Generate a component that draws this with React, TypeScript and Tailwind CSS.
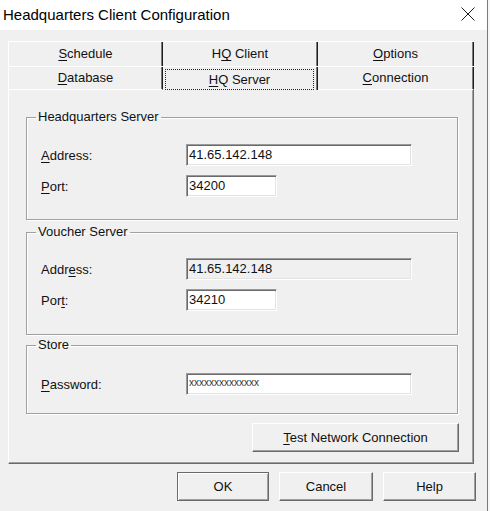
import type { ReactNode } from "react"

function U({ children }: { children: ReactNode }) {
  return <span className="underline underline-offset-[2px] decoration-1">{children}</span>
}

function Tab({ children, className = "" }: { children: ReactNode; className?: string }) {
  return (
    <div
      className={`flex items-center justify-center border-r border-r-[#1e1e1e] shadow-[inset_-1px_0_0_#7a7a7a] ${className}`}
    >
      {children}
    </div>
  )
}

function Field({
  label,
  value,
  width,
  disabled,
  small,
}: {
  label: ReactNode
  value: string
  width: string
  disabled?: boolean
  small?: boolean
}) {
  return (
    <div className="flex items-center h-[22px]">
      <div className="w-[159px] pl-[14px] pt-[2px]">{label}</div>
      <div
        className={`${width} h-[22px] flex pl-[2px] border border-t-[#9a9a9a] border-l-[#9a9a9a] border-r-white border-b-white shadow-[inset_1px_1px_0_#6a6a6a,inset_-1px_-1px_0_#e3e3e3] ${
          disabled ? "bg-[#f0f0f0]" : "bg-white"
        } ${small ? "items-start pt-[1px] text-[10px] text-[#333]" : "items-center"}`}
      >
        {value}
      </div>
    </div>
  )
}

function Group({ title, children, className }: { title: string; children: ReactNode; className: string }) {
  return (
    <fieldset
      className={`border border-[#a0a0a0] shadow-[inset_1px_1px_0_#fff,1px_1px_0_#fff] flex flex-col gap-[9px] ${className}`}
    >
      <legend className="ml-[9px] px-[2px] leading-[16px]">{title}</legend>
      {children}
    </fieldset>
  )
}

function Button({ children, className = "", strong }: { children: ReactNode; className?: string; strong?: boolean }) {
  return (
    <button
      className={`h-[29px] flex items-center justify-center bg-[#f0f0f0] border ${
        strong
          ? "border-[#6a6a6a] shadow-[inset_1px_1px_0_#fff,inset_-1px_-1px_0_#a0a0a0]"
          : "border-t-white border-l-white border-r-[#6a6a6a] border-b-[#6a6a6a] shadow-[inset_-1px_-1px_0_#a0a0a0]"
      } ${className}`}
    >
      {children}
    </button>
  )
}

export default function App() {
  return (
    <div className="w-[490px] h-[511px] flex bg-[#f0f0f0] text-[13px] text-[#111] font-['Liberation_Sans',Arial,sans-serif]">
      <div className="w-[487px] flex flex-col">
        {/* Title bar */}
        <div className="h-[30px] bg-white flex items-center justify-between pl-[3px] pr-[12px]">
          <span className="text-[15px] leading-none pb-[2px] text-black">Headquarters Client Configuration</span>
          <svg width="14" height="14" viewBox="0 0 14 14" className="mb-[3px]">
            <path d="M0.5 0.5 L13.5 13.5 M13.5 0.5 L0.5 13.5" stroke="#1a1a1a" strokeWidth="1" fill="none" />
          </svg>
        </div>

        {/* Tabs */}
        <div className="ml-[8px] mt-[11px] w-[466px]">
          <div className="flex h-[25px] border-t border-l border-white">
            <Tab className="w-[154px]">
              <span>
                <U>S</U>chedule
              </span>
            </Tab>
            <Tab className="w-[155px]">
              <span>
                H<U>Q</U> Client
              </span>
            </Tab>
            <Tab className="w-[156px]">
              <span>
                <U>O</U>ptions
              </span>
            </Tab>
          </div>
          <div className="flex h-[24px] border-t border-l border-white">
            <Tab className="w-[154px] border-b border-b-white">
              <span>
                <U>D</U>atabase
              </span>
            </Tab>
            <Tab className="w-[155px] pl-[2px] pr-[3px] pt-[2px]">
              <span className="w-full h-full flex items-center justify-center border border-dotted border-[#222]">
                <span>
                  <U>H</U>Q Server
                </span>
              </span>
            </Tab>
            <Tab className="w-[156px] border-b border-b-white">
              <span>
                <U>C</U>onnection
              </span>
            </Tab>
          </div>

          {/* Panel */}
          <div className="h-[374px] border-l border-l-white border-r border-r-[#6a6a6a] border-b border-b-[#6a6a6a] shadow-[inset_-1px_-1px_0_#a0a0a0] pl-[17px] pr-[15px] flex flex-col">
            <Group title="Headquarters Server" className="mt-[19px] pt-[19px] pb-[22px]">
              <Field
                label={
                  <span>
                    <U>A</U>ddress:
                  </span>
                }
                value="41.65.142.148"
                width="w-[226px]"
              />
              <Field
                label={
                  <span>
                    <U>P</U>ort:
                  </span>
                }
                value="34200"
                width="w-[91px]"
              />
            </Group>
            <Group title="Voucher Server" className="mt-[4px] pt-[18px] pb-[23px]">
              <Field
                label={
                  <span>
                    Addr<U>e</U>ss:
                  </span>
                }
                value="41.65.142.148"
                width="w-[226px]"
                disabled
              />
              <Field
                label={
                  <span>
                    Por<U>t</U>:
                  </span>
                }
                value="34210"
                width="w-[91px]"
              />
            </Group>
            <Group title="Store" className="mt-[2px] pt-[20px] pb-[18px]">
              <Field
                label={
                  <span>
                    <U>P</U>assword:
                  </span>
                }
                value="xxxxxxxxxxxxxx"
                width="w-[226px]"
                small
              />
            </Group>
            <div className="flex justify-end mt-[9px] -mr-[1px]">
              <Button className="w-[207px]">
                <span>
                  <U>T</U>est Network Connection
                </span>
              </Button>
            </div>
          </div>
        </div>

        {/* Dialog buttons */}
        <div className="flex justify-end gap-[10px] pr-[11px] mt-[8px]">
          <Button className="w-[92px]" strong>
            OK
          </Button>
          <Button className="w-[94px]">Cancel</Button>
          <Button className="w-[93px]">Help</Button>
        </div>
      </div>
      <div className="w-[1px] bg-[#7a7a7a]" />
      <div className="w-[2px] bg-[#f7f7f7]" />
    </div>
  )
}
